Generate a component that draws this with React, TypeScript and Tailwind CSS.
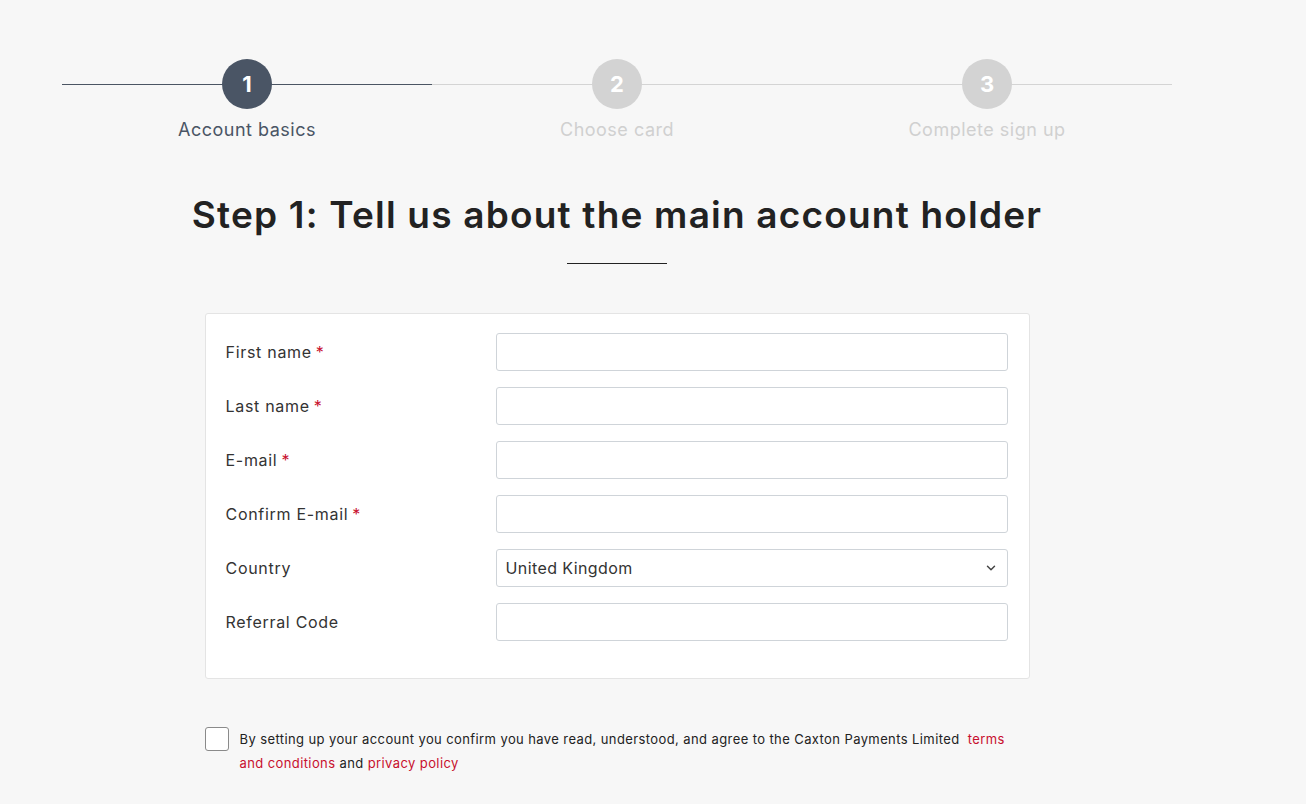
import { ChevronDown } from 'lucide-react'

const steps = [
  { n: 1, label: 'Account basics', active: true },
  { n: 2, label: 'Choose card', active: false },
  { n: 3, label: 'Complete sign up', active: false },
]

const fields = [
  { label: 'First name', required: true },
  { label: 'Last name', required: true },
  { label: 'E-mail', required: true },
  { label: 'Confirm E-mail', required: true },
  { label: 'Country', select: 'United Kingdom' },
  { label: 'Referral Code' },
]

function Stepper() {
  return (
    <div className="flex">
      {steps.map((s) => (
        <div key={s.n} className="relative flex w-[370px] flex-col items-center">
          <div
            className={`absolute left-0 right-0 top-[25px] h-px ${s.active ? 'bg-[#4b5563]' : 'bg-[#d4d4d4]'}`}
          />
          <div
            className={`relative flex h-[50px] w-[50px] items-center justify-center rounded-full text-[22px] font-bold text-white ${
              s.active ? 'bg-[#4a5565]' : 'bg-[#d3d3d3]'
            }`}
          >
            {s.n}
          </div>
          <div
            className={`mt-[8px] text-[18px] leading-[26px] tracking-[0.5px] ${
              s.active ? 'text-[#4a5565]' : 'text-[#d0d0d0]'
            }`}
          >
            {s.label}
          </div>
        </div>
      ))}
    </div>
  )
}

export default function App() {
  return (
    <div
      className="min-h-[804px] bg-[#f7f7f7] pt-[59px] text-[#333]"
      style={{ fontFamily: 'Inter, "Noto Sans", sans-serif' }}
    >
      <div className="ml-[62px] w-[1110px]">
        <Stepper />
        <h1 className="mt-[50px] text-center text-[37px] font-semibold leading-[44px] tracking-[1.2px] text-[#222]">
          Step 1: Tell us about the main account holder
        </h1>
        <div className="mx-auto mt-[26px] h-px w-[100px] bg-[#222]" />

        <div className="mx-auto mt-[49px] w-[825px] rounded-[3px] border border-[#e4e4e4] bg-white px-[20px] pb-[37px] pt-[19px]">
          <div className="flex flex-col gap-[16px]">
            {fields.map((f) => (
              <div key={f.label} className="flex items-center">
                <label className="w-[270px] text-[16px] tracking-[0.7px] text-[#333]">
                  {f.label}
                  {f.required && <span className="ml-[4px] text-[#c8102e]">*</span>}
                </label>
                {f.select ? (
                  <div className="flex h-[38px] w-[512px] items-center justify-between rounded-[3px] border border-[#cfd4d9] bg-white px-[9px] text-[16px] tracking-[0.4px] text-[#333]">
                    <span>{f.select}</span>
                    <ChevronDown className="h-[14px] w-[14px] text-[#444]" strokeWidth={2.5} />
                  </div>
                ) : (
                  <input
                    className="h-[38px] w-[512px] rounded-[3px] border border-[#cfd4d9] bg-white px-[10px] text-[16px] outline-none"
                    type="text"
                  />
                )}
              </div>
            ))}
          </div>
        </div>

        <div className="mx-auto mt-[48px] flex w-[825px] items-start">
          <div className="h-[24px] w-[24px] shrink-0 rounded-[3px] border border-[#8a8a8a] bg-white" />
          <p className="ml-[11px] w-[785px] text-[13px] leading-[24px] tracking-[0.4px] text-[#222]">
            By setting up your account you confirm you have read, understood, and agree to the Caxton Payments
            Limited&nbsp; <span className="text-[#c8102e]">terms and conditions</span> and{' '}
            <span className="text-[#c8102e]">privacy policy</span>
          </p>
        </div>
      </div>
    </div>
  )
}
